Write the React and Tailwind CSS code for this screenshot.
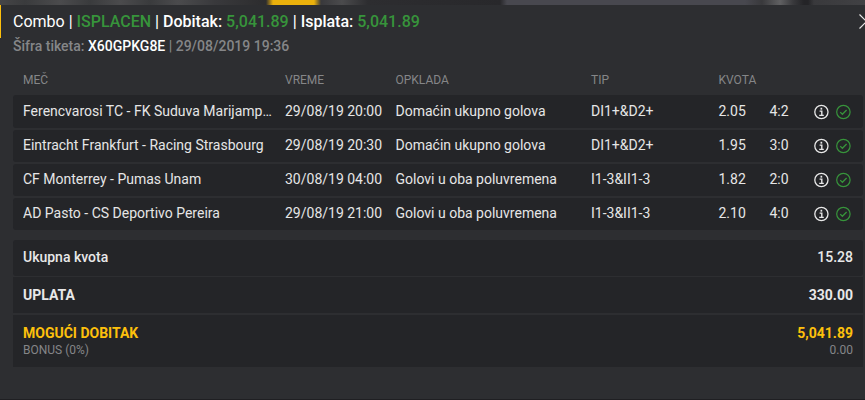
import React from 'react';

const matches = [
  { name: 'Ferencvarosi TC - FK Suduva Marijamp…', time: '29/08/19 20:00', bet: 'Domaćin ukupno golova', tip: 'DI1+&D2+', odds: '2.05', score: '4:2' },
  { name: 'Eintracht Frankfurt - Racing Strasbourg', time: '29/08/19 20:30', bet: 'Domaćin ukupno golova', tip: 'DI1+&D2+', odds: '1.95', score: '3:0' },
  { name: 'CF Monterrey - Pumas Unam', time: '30/08/19 04:00', bet: 'Golovi u oba poluvremena', tip: 'I1-3&II1-3', odds: '1.82', score: '2:0' },
  { name: 'AD Pasto - CS Deportivo Pereira', time: '29/08/19 21:00', bet: 'Golovi u oba poluvremena', tip: 'I1-3&II1-3', odds: '2.10', score: '4:0' },
];

const InfoIcon = () => (
  <svg className="w-4 h-4 shrink-0 text-[#e8e8e8]" viewBox="0 0 16 16" fill="none" stroke="currentColor">
    <circle cx="8.4" cy="8" r="6.6" strokeWidth="1.3" />
    <path d="M6.6 7.1h2.2v4.2M6.2 11.4h4.6" strokeWidth="1.4" />
    <path d="M7.5 4.7h1.7" strokeWidth="1.9" />
  </svg>
);

const CheckIcon = () => (
  <svg className="w-4 h-4 shrink-0 text-[#37943b]" viewBox="0 0 16 16" fill="none" stroke="currentColor">
    <circle cx="8.4" cy="8" r="6.7" strokeWidth="1.2" />
    <path d="M5.2 8.1l2.2 2.2 4.2-4.3" strokeWidth="1.3" />
  </svg>
);

const MatchRow = ({ match }) => (
  <div className="flex h-8 first:h-[33px] items-center rounded-[3px] bg-[#242528] pb-0.5 pl-2.5 text-sm text-[#e6e6e6]">
    <span className="w-[250px] mr-3 truncate">{match.name}</span>
    <span className="w-[110.5px]">{match.time}</span>
    <span className="w-[195.5px]">{match.bet}</span>
    <span className="w-[127.5px]">{match.tip}</span>
    <span className="w-[51px]">{match.odds}</span>
    <span className="w-[43.5px]">{match.score}</span>
    <span className="flex gap-1.5 pt-0.5">
      <InfoIcon />
      <CheckIcon />
    </span>
  </div>
);

const App = () => {
  return (
    <div className="flex h-[400px] w-[865px] flex-col overflow-hidden border-b border-[#1f1f22] bg-[#2d2e31] font-['Roboto',sans-serif]">
      {/* Edge of the page behind the panel */}
      <div className="h-[5px] shrink-0 bg-[linear-gradient(90deg,#454547_0px,#3a3b3d_25px,#4b4b4d_60px,#3a3b3d_90px,#4b4b4d_120px,#3a3b3d_150px,#4b4b4d_178px,#39393c_215px,#2d2d2f_262px,#2d2d2f_266px,#ebb10c_273px,#ebb10c_314px,#39393c_321px,#4b4b4d_342px,#2d2d30_368px,#28282b_500px,#48484f_507px,#48484f_745px,#39393c_762px,#606062_780px,#39393c_793px,#242427_804px,#242427_808px,#39393c_814px,#414144_865px)]" />

      <div className="flex h-[33px] shrink-0 border-l border-[#fdc00c] pl-3">
        <div className="flex-1 whitespace-pre pt-[5px] text-base font-medium leading-6 text-white">
          <span className="font-normal">Combo | </span>
          <span className="text-[#37943b]">ISPLACEN</span>
          {' | Dobitak: '}
          <span className="text-[#37943b]">5,041.89</span>
          {' | Isplata: '}
          <span className="text-[#37943b]">5,041.89</span>
        </div>
        <svg className="mt-[9px] -mr-[9px] h-[15px] w-[15px] shrink-0 text-[#e8e8e8]" viewBox="0 0 15 15" stroke="currentColor" strokeWidth="1.2">
          <path d="M.5 .5l14 14M14.5 .5l-14 14" />
        </svg>
      </div>

      <div className="-mt-[2px] h-5 shrink-0 pl-[13px] text-sm font-medium leading-5 text-[#858688]">
        Šifra tiketa: <span className="text-white">X60GPKG8E</span> | 29/08/2019 19:36
      </div>

      <div className="mr-[2px] ml-[13px]">
        <div className="mt-[15px] flex h-6 pl-2.5 text-xs leading-[18px] text-[#858688]">
          <span className="w-[262px]">MEČ</span>
          <span className="w-[110.5px]">VREME</span>
          <span className="w-[195.5px]">OPKLADA</span>
          <span className="w-[127.5px]">TIP</span>
          <span>KVOTA</span>
        </div>

        <div className="flex flex-col gap-0.5">
          {matches.map((match) => (
            <MatchRow key={match.name} match={match} />
          ))}
        </div>

        {/* Totals */}
        <div className="mt-2.5 text-sm font-medium text-[#e8e8e8]">
          <div className="flex h-9 items-center justify-between rounded-[3px] bg-[#242528] px-2.5 pb-0.5">
            <span>Ukupna kvota</span>
            <span>15.28</span>
          </div>
          <div className="mt-px flex h-9 items-center justify-between bg-[#242528] px-2.5 font-bold">
            <span>UPLATA</span>
            <span>330.00</span>
          </div>
          <div className="mt-0.5 h-[52px] bg-[#242528] px-2.5 pt-2">
            <div className="flex justify-between font-bold leading-5 text-[#fdc00c]">
              <span>MOGUĆI DOBITAK</span>
              <span>5,041.89</span>
            </div>
            <div className="flex justify-between text-xs font-normal leading-[14px] text-[#858688]">
              <span>BONUS (0%)</span>
              <span>0.00</span>
            </div>
          </div>
        </div>
      </div>
    </div>
  );
};

export default App;
